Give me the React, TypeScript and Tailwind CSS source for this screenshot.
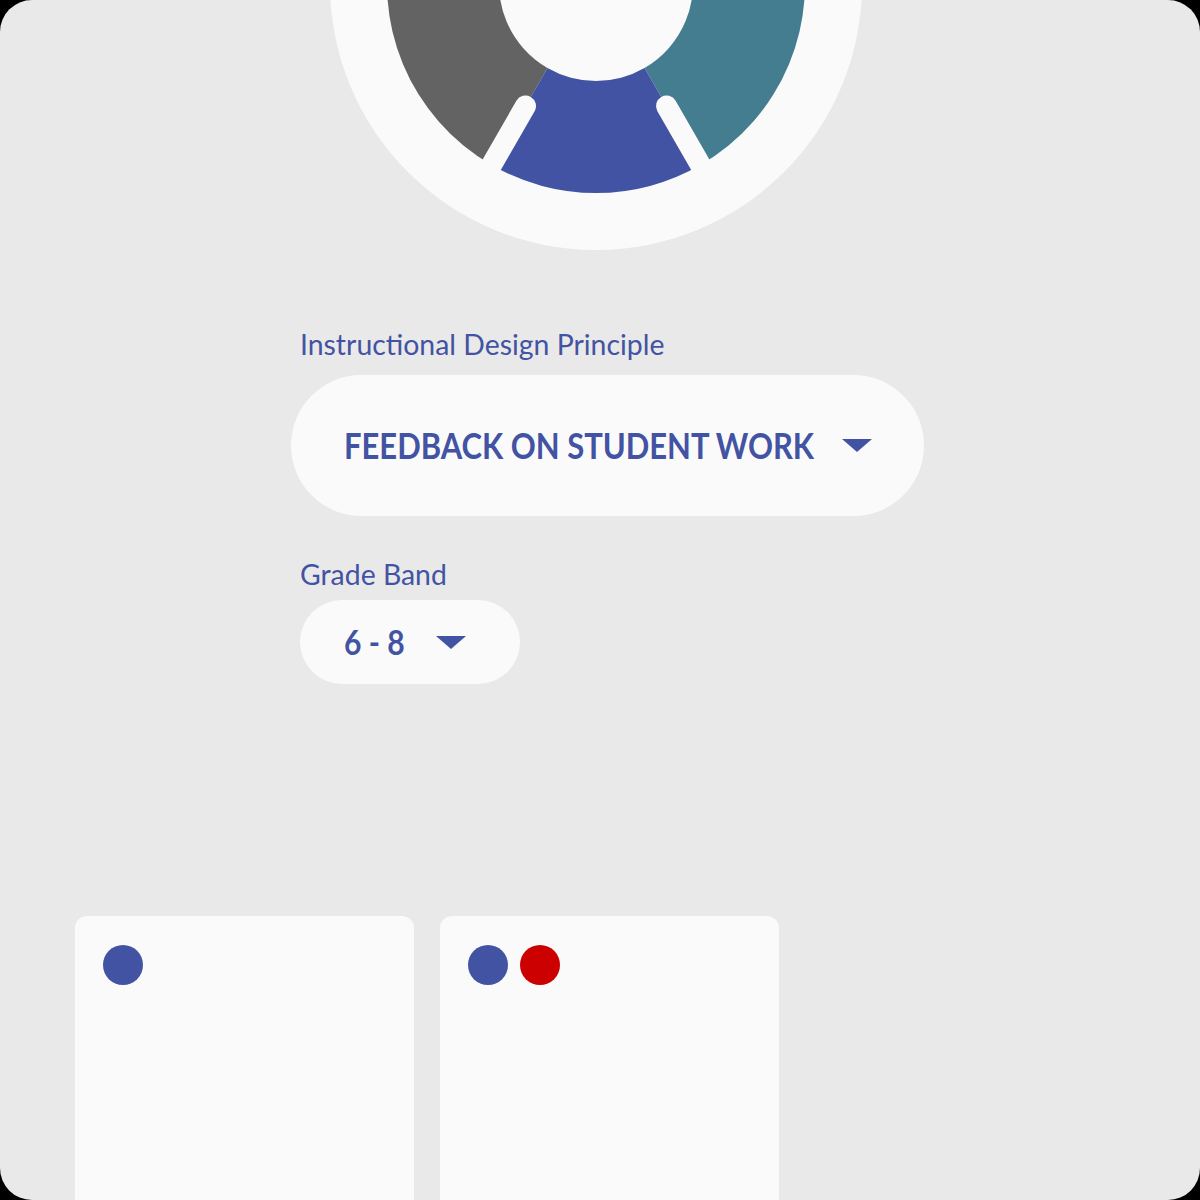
import React from 'react';

const BLUE = '#4353a3';

const Caret: React.FC<{ className?: string }> = ({ className }) => (
  <svg viewBox="0 0 30 13" className={className}>
    <path d="M0 0 H30 L15 13 Z" fill={BLUE} />
  </svg>
);

const Wheel: React.FC = () => (
  <svg viewBox="0 0 532 532" className="w-[532px] h-[532px]">
    <circle cx="266" cy="266" r="266" fill="#fafafa" />
    {/* segments */}
    <path d="M266 57 A209 209 0 0 0 161.5 447 L217.5 350 A97 97 0 0 1 266 169 Z" fill="#636363" />
    <path d="M266 57 A209 209 0 0 1 370.5 447 L314.5 350 A97 97 0 0 0 266 169 Z" fill="#437d8f" />
    <path d="M161.5 447 A209 209 0 0 0 370.5 447 L314.5 350 A97 97 0 0 1 217.5 350 Z" fill={BLUE} />
    {/* separators */}
    <line x1="195.5" y1="388" x2="146" y2="474" stroke="#fafafa" strokeWidth="21" strokeLinecap="round" />
    <line x1="336.5" y1="388" x2="386" y2="474" stroke="#fafafa" strokeWidth="21" strokeLinecap="round" />
  </svg>
);

const Card: React.FC<{ dots: string[] }> = ({ dots }) => (
  <div className="w-[339px] h-[320px] bg-[#fafafa] rounded-[12px] px-[28px] pt-[29px]">
    <div className="flex gap-[12px]">
      {dots.map((c, i) => (
        <span key={i} className="block w-[40px] h-[40px] rounded-full" style={{ backgroundColor: c }} />
      ))}
    </div>
  </div>
);

export default function App() {
  return (
    <div className="w-[1200px] h-[1200px] bg-black">
      <div
        className="w-full h-full rounded-[32px] bg-[#e9e9e9] overflow-hidden flex flex-col"
        style={{ fontFamily: 'Lato, "Noto Sans", sans-serif' }}
      >
        <div className="-mt-[282px] ml-[330px]">
          <Wheel />
        </div>

        <div className="pl-[300px] mt-[76px] flex flex-col">
          <label className="text-[28.4px] leading-[36px] text-[#4353a3]">Instructional Design Principle</label>
          <button className="-ml-[9px] mt-[13px] w-[633px] h-[141px] rounded-full bg-[#fafafa] flex items-center pl-[53px] gap-[30px]">
            <span className="w-[468px] text-left">
              <span className="inline-block whitespace-nowrap origin-left scale-x-[0.86] text-[36px] font-bold text-[#4353a3] leading-none">
                FEEDBACK ON STUDENT WORK
              </span>
            </span>
            <Caret className="w-[30px] h-[13px]" />
          </button>

          <label className="mt-[40px] text-[28.4px] leading-[36px] text-[#4353a3]">Grade Band</label>
          <button className="mt-[8px] w-[220px] h-[84px] rounded-full bg-[#fafafa] flex items-center pl-[44px] gap-[31px]">
            <span className="w-[61px] text-left">
              <span className="inline-block whitespace-nowrap origin-left scale-x-[0.86] text-[35px] font-bold text-[#4353a3] leading-none">
                6 - 8
              </span>
            </span>
            <Caret className="w-[30px] h-[13px]" />
          </button>
        </div>

        <div className="mt-[232px] pl-[75px] flex gap-[26px]">
          <Card dots={[BLUE]} />
          <Card dots={[BLUE, '#cc0000']} />
        </div>
      </div>
    </div>
  );
}
